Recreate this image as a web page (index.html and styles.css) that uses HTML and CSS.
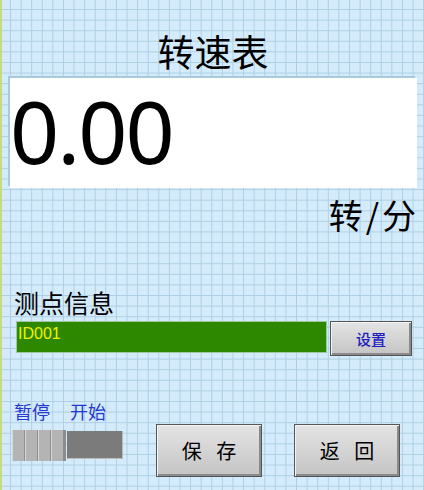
FILE: index.html
```html
<!DOCTYPE html>
<html>
<head>
<meta charset="utf-8">
<link rel="stylesheet" href="styles.css">
</head>
<body>
<div class="screen">
  <div class="title">转速表</div>
  <div class="display"><span class="value">0.00</span></div>
  <div class="unit"><span>转</span><span>/</span><span>分</span></div>
  <div class="label">测点信息</div>
  <div class="info-row">
    <div class="info-field">ID001</div>
    <div class="btn small">设置</div>
  </div>
  <div class="bottom">
    <div class="toggle-col">
      <div class="toggle-labels"><span>暂停</span><span>开始</span></div>
      <div class="toggle">
        <div class="knob"><i></i><i></i><i></i><i></i></div>
        <div class="track"></div>
      </div>
    </div>
    <div class="btn big">保 存</div>
    <div class="btn big">返 回</div>
  </div>
</div>
</body>
</html>
```
FILE: styles.css
```css
html, body { margin: 0; padding: 0; }
body {
  width: 424px;
  height: 490px;
  overflow: hidden;
  font-family: "Noto Sans CJK SC", "Noto Sans", sans-serif;
}
.screen {
  box-sizing: border-box;
  width: 424px;
  height: 490px;
  border-left: 2px solid #c8dc7c;
  background-color: #d3ebfa;
  background-image:
    linear-gradient(to right, #aecfe3 1px, transparent 1px),
    linear-gradient(to bottom, #aecfe3 1px, transparent 1px);
  background-size: 10.6px 10.6px;
  background-position: 8px 9px;
  display: flex;
  flex-direction: column;
}
.title {
  text-align: center;
  font-size: 37px;
  line-height: 40px;
  margin-top: 31px;
  color: #000;
}
.display {
  margin: 7px 7px 0 8px;
  height: 110px;
  background: #fff;
  box-shadow: -2px -2px 0 #a9c9dc;
  display: flex;
  align-items: center;
}
.value {
  font-family: "Noto Sans", sans-serif;
  font-size: 86px;
  letter-spacing: -2px;
  line-height: 1;
  margin-left: 0;
  margin-top: -4px;
  color: #000;
}
.unit {
  align-self: flex-end;
  margin-right: 8px;
  margin-top: 8px;
  font-size: 34px;
  line-height: 38px;
  display: flex;
  gap: 3px;
}
.label {
  margin-top: 53px;
  margin-left: 12px;
  font-size: 25px;
  line-height: 30px;
}
.info-row {
  display: flex;
  gap: 3px;
  margin-top: 4px;
  margin-left: 14px;
  align-items: flex-start;
}
.info-field {
  width: 311px;
  height: 32px;
  box-sizing: border-box;
  background: #2d8800;
  border: 1px solid #9ec8a0;
  color: #f0f000;
  font-family: "Liberation Sans", sans-serif;
  font-size: 16px;
  line-height: 18px;
  padding: 3px 0 0 1px;
}
.btn {
  box-sizing: border-box;
  background: linear-gradient(to bottom, #e4e4e4, #c4c4c4);
  border: 1px solid #555;
  box-shadow: inset 1px 1px 0 #f4f4f4, inset -2px -2px 0 #8a8a8a;
  display: flex;
  align-items: center;
  justify-content: center;
}
.btn.small {
  width: 82px;
  height: 35px;
  color: #2020c0;
  font-size: 15px;
  font-weight: 500;
}
.bottom {
  display: flex;
  align-items: flex-start;
  margin-top: 44px;
  margin-left: 10px;
}
.toggle-col {
  width: 111px;
  display: flex;
  flex-direction: column;
}
.toggle-labels {
  display: flex;
  gap: 20px;
  color: #2638d0;
  font-size: 18px;
  line-height: 22px;
  margin-left: 2px;
}
.toggle {
  display: flex;
  margin-top: 8px;
  height: 31px;
}
.knob {
  width: 52px;
  height: 31px;
  display: flex;
  background: #b4b4b4;
  box-shadow: 2px 0 0 #8c8c8c;
}
.knob i {
  flex: 1;
  border-left: 1px solid #d8d8d8;
  border-right: 1px solid #8e8e8e;
}
.track {
  margin-left: 3px;
  margin-top: 1px;
  width: 56px;
  height: 27px;
  background: #7b7b7b;
  border-right: 1px solid #bbb;
  border-bottom: 1px solid #bbb;
}
.btn.big {
  width: 106px;
  height: 53px;
  margin-top: 24px;
  font-size: 20px;
  letter-spacing: 5px;
  padding-left: 5px;
  color: #000;
}
.toggle-col + .btn.big { margin-left: 33px; }
.btn.big + .btn.big { margin-left: 32px; }
```
